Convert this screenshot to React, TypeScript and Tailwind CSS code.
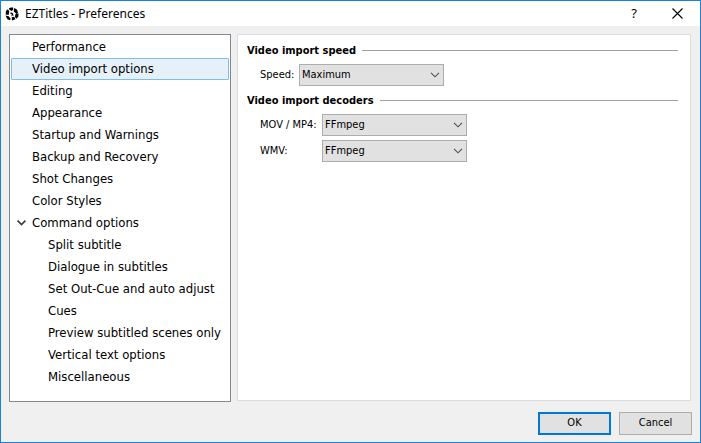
import React from "react";

type Item = { label: string; tracking: string; child?: boolean; selected?: boolean; open?: boolean };

const items: Item[] = [
  { label: "Performance", tracking: "tracking-[0px]" },
  { label: "Video import options", tracking: "tracking-[0px]", selected: true },
  { label: "Editing", tracking: "tracking-[0px]" },
  { label: "Appearance", tracking: "tracking-[0px]" },
  { label: "Startup and Warnings", tracking: "tracking-[0px]" },
  { label: "Backup and Recovery", tracking: "tracking-[0px]" },
  { label: "Shot Changes", tracking: "tracking-[0px]" },
  { label: "Color Styles", tracking: "tracking-[0px]" },
  { label: "Command options", tracking: "tracking-[0px]", open: true },
  { label: "Split subtitle", tracking: "tracking-[0px]", child: true },
  { label: "Dialogue in subtitles", tracking: "tracking-[0px]", child: true },
  { label: "Set Out-Cue and auto adjust", tracking: "tracking-[0px]", child: true },
  { label: "Cues", tracking: "tracking-[0px]", child: true },
  { label: "Preview subtitled scenes only", tracking: "tracking-[0px]", child: true },
  { label: "Vertical text options", tracking: "tracking-[0px]", child: true },
  { label: "Miscellaneous", tracking: "tracking-[0px]", child: true },
];

function Logo() {
  return (
    <svg width="14" height="14" viewBox="0 0 14 14" fill="#000">
      <path d="M4.2 1 7.6.2l.9 2.3L6.6 4 4 2.6zM9.3 1l2.6 1.5 1.2 3-1.5 1.2-2.9-2.2zM.9 4l2-1.7 1.4 2.3L3.6 8 .7 7.4zM13.6 6.5l-.3 3.2-2 2-1.4-2 .7-3zM.5 8.6l3.2.6 2 2.6-.8 1.4-2.6-1zM6.7 10.3l2.4-.6 1.4 2.6-3.5 1.3zM6 5l1.2 1.2L8.4 5.6 7.8 7l1.3 1.9-1.2-.7-1.5 1.2.3-2.1-1.4-.6z" />
    </svg>
  );
}

function Section({ title, tracking }: { title: string; tracking: string }) {
  return (
    <div className="flex h-4 items-center pr-[12px] pl-[9px]">
      <h2 className={"text-[11px] leading-4 font-bold " + tracking}>{title}</h2>
      <div className="-mt-px ml-[6px] h-px flex-1 bg-[#a0a0a0]" />
    </div>
  );
}

function Select({ value }: { value: string }) {
  return (
    <button className="flex h-[22px] w-[145px] items-center justify-between border border-[#adadad] bg-[#e1e1e1] pr-[3px] pl-[2px] text-[11px]">
      <span>{value}</span>
      <svg width="10" height="6" viewBox="0 0 10 6" fill="none" stroke="#505050" strokeWidth="1.1">
        <path d="M1 .8 5 4.8 9 .8" />
      </svg>
    </button>
  );
}

export default function App() {
  return (
    <div className="flex h-[443px] w-[701px] flex-col border border-[#1883d7] bg-[#f0f0f0] font-['DejaVu_Sans_Condensed','DejaVu_Sans',sans-serif] text-black">
      <header className="flex h-[25px] shrink-0 items-center bg-white pl-[4px]">
        <Logo />
        <span className="ml-[6px] font-['Noto_Sans',sans-serif] text-[12px] leading-4">EZTitles - Preferences</span>
        <span className="mr-[35px] ml-auto font-['Noto_Sans',sans-serif] text-[13px]">?</span>
        <svg className="mr-[17px]" width="11" height="11" viewBox="0 0 11 11" stroke="#000" strokeWidth="1.1">
          <path d="M.5.5l10 10M10.5.5l-10 10" />
        </svg>
      </header>
      <main className="flex gap-[6px] pt-[8px] pl-[8px]">
        <ul className="h-[368px] w-[222px] border border-[#828790] bg-white px-px pt-px text-[13px]">
          {items.map((it) => (
            <li
              key={it.label}
              className={
                "flex h-[22px] items-center border whitespace-nowrap " +
                (it.selected ? "rounded-[1px] border-[#7fbdec] bg-[#e5f0f9] " : "border-transparent ") +
                (it.child ? "pl-[36px] " : it.open ? "pl-[5px] " : "pl-[20px] ")
              }
            >
              {it.open && (
                <svg className="mr-[6px]" width="9" height="6" viewBox="0 0 9 6" fill="none" stroke="#404040" strokeWidth="1.7">
                  <path d="M.6.7 4.5 4.6 8.4.7" />
                </svg>
              )}
              <span className={it.tracking}>{it.label}</span>
            </li>
          ))}
        </ul>
        <section className="h-[367px] w-[454px] border border-[#dcdcdc] bg-white pt-[8px]">
          <Section title="Video import speed" tracking="tracking-[0px]" />
          <div className="mt-[5px] flex items-center pl-[22px] text-[11px]">
            <span className="w-[39px] whitespace-nowrap">Speed:</span>
            <Select value="Maximum" />
          </div>
          <div className="mt-[7px]">
            <Section title="Video import decoders" tracking="tracking-[0px]" />
          </div>
          <div className="mt-[5px] flex items-center pl-[22px] text-[11px]">
            <span className="w-[62px] whitespace-nowrap">MOV / MP4:</span>
            <Select value="FFmpeg" />
          </div>
          <div className="mt-[4px] flex items-center pl-[22px] text-[11px]">
            <span className="w-[62px] whitespace-nowrap">WMV:</span>
            <Select value="FFmpeg" />
          </div>
        </section>
      </main>
      <footer className="mt-[10px] flex justify-end gap-[8px] pr-[8px] text-[11px]">
        <button className="h-[23px] w-[73px] border-2 border-[#0078d7] bg-[#e1e1e1]">OK</button>
        <button className="h-[23px] w-[73px] border border-[#adadad] bg-[#e1e1e1]">Cancel</button>
      </footer>
    </div>
  );
}
